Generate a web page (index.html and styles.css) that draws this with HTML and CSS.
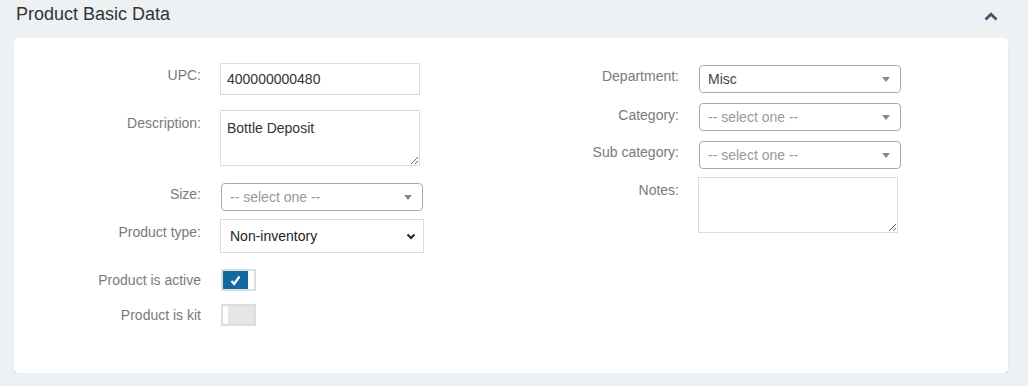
FILE: index.html
```html
<!DOCTYPE html>
<html>
<head>
  <title>Product Basic Data</title>
  <link rel="stylesheet" href="styles.css">
</head>
<body>
  <div class="panel-header">
    <h2>Product Basic Data</h2>
    <svg class="collapse-icon" width="14" height="9" viewBox="0 0 14 9">
      <polyline points="1.5,7.5 7,2.2 12.5,7.5" fill="none" stroke="#3b5676" stroke-width="2.8"/>
    </svg>
  </div>

  <div class="card">
    <div class="col col-left">
      <div class="row row-upc">
        <label>UPC:</label>
        <input type="text" class="text-input" value="400000000480">
      </div>
      <div class="row row-desc">
        <label>Description:</label>
        <textarea class="text-area">Bottle Deposit</textarea>
      </div>
      <div class="row row-size">
        <label>Size:</label>
        <div class="select2 select2-shift">
          <span class="placeholder">-- select one --</span>
          <span class="arrow"></span>
        </div>
      </div>
      <div class="row row-type">
        <label>Product type:</label>
        <div class="native-select">
          <select>
            <option>Non-inventory</option>
          </select>
          <svg class="native-chevron" width="10" height="7" viewBox="0 0 10 7">
            <polyline points="1.5,1.5 5,5 8.5,1.5" fill="none" stroke="#222" stroke-width="2"/>
          </svg>
        </div>
      </div>
      <div class="row row-toggle row-active">
        <label>Product is active</label>
        <div class="toggle toggle-on">
          <span class="toggle-fill">
            <svg width="11" height="11" viewBox="0 0 11 11">
              <polyline points="1.5,6 4.2,9 9.5,1.5" fill="none" stroke="#fff" stroke-width="2.2"/>
            </svg>
          </span>
          <span class="toggle-knob"></span>
        </div>
      </div>
      <div class="row row-toggle">
        <label>Product is kit</label>
        <div class="toggle toggle-off">
          <span class="toggle-knob"></span>
          <span class="toggle-fill"></span>
        </div>
      </div>
    </div>

    <div class="col col-right">
      <div class="row row-select">
        <label>Department:</label>
        <div class="select2">
          <span class="value">Misc</span>
          <span class="arrow"></span>
        </div>
      </div>
      <div class="row row-select">
        <label class="pad2">Category:</label>
        <div class="select2">
          <span class="placeholder">-- select one --</span>
          <span class="arrow"></span>
        </div>
      </div>
      <div class="row row-select row-sub">
        <label>Sub category:</label>
        <div class="select2">
          <span class="placeholder">-- select one --</span>
          <span class="arrow"></span>
        </div>
      </div>
      <div class="row row-notes">
        <label>Notes:</label>
        <textarea class="text-area notes-area"></textarea>
      </div>
    </div>
  </div>
</body>
</html>
```

FILE: styles.css
```css
/* Page */
body {
  font-family: "Liberation Sans", Arial, sans-serif;
  background-color: #eef1f4;
  margin: 0;
  padding: 0;
  color: #333;
}

/* Panel header */
.panel-header {
  display: flex;
  justify-content: space-between;
  align-items: flex-start;
  height: 38px;
  box-sizing: border-box;
  padding: 3px 30px 0 16px;
}
.panel-header h2 {
  margin: 0;
  font-size: 18px;
  line-height: 22px;
  font-weight: normal;
  color: #333;
}
.collapse-icon {
  margin-top: 9px;
}

/* Card */
.card {
  display: flex;
  margin: 0 20px 0 14px;
  height: 335px;
  box-sizing: border-box;
  background-color: #fff;
  border-radius: 4px;
  box-shadow: 0 1px 1px rgba(0, 0, 0, 0.22);
  padding: 25px 16px 0;
}
.col-left {
  width: 470px;
}
.col-right {
  padding-top: 2px;
}

/* Form rows */
.row {
  display: grid;
  grid-template-columns: 171px auto;
  column-gap: 19px;
  align-items: start;
}
.col-right .row {
  grid-template-columns: 179px auto;
  column-gap: 20px;
  margin-bottom: 10px;
}
.row label {
  font-size: 14px;
  line-height: 20px;
  color: #7a7a7a;
  text-align: right;
}
.row-upc {
  margin-bottom: 15px;
}
.row-upc label {
  padding-top: 2px;
}
.row-desc {
  margin-bottom: 17px;
}
.row-desc label {
  padding-top: 3px;
}
.row-size {
  margin-bottom: 8px;
}
.row-size label {
  padding-top: 1px;
}
.row-type {
  margin-bottom: 16px;
}
.row-type label {
  padding-top: 3px;
}
.row-toggle {
  align-items: center;
}
.row-active {
  margin-bottom: 13px;
}
.col-right .row-sub {
  margin-bottom: 8px;
}
.row-select label {
  padding-top: 1px;
}
.row-select label.pad2 {
  padding-top: 2px;
}
.row-notes label {
  padding-top: 3px;
}

/* Inputs */
.text-input {
  width: 200px;
  height: 32px;
  box-sizing: border-box;
  border: 1px solid #dcdcdc;
  padding: 0 6px;
  font-family: inherit;
  font-size: 14px;
  color: #333;
  outline: none;
}
.text-area {
  width: 200px;
  height: 56px;
  box-sizing: border-box;
  border: 1px solid #dcdcdc;
  padding: 7px 6px;
  font-family: inherit;
  font-size: 14px;
  line-height: 20px;
  color: #333;
  margin: 0;
  display: block;
  outline: none;
}
.notes-area {
  margin-left: -1px;
}

/* Select2 style dropdown */
.select2 {
  position: relative;
  width: 202px;
  height: 28px;
  box-sizing: border-box;
  border: 1px solid #aaa;
  border-radius: 4px;
  padding: 0 8px;
  font-size: 14px;
  line-height: 26px;
}
.select2-shift {
  margin-left: 1px;
}
.select2 .value {
  color: #444;
}
.select2 .placeholder {
  color: #999;
}
.select2 .arrow {
  position: absolute;
  right: 10px;
  top: 11px;
  border-top: 5px solid #888;
  border-left: 4px solid transparent;
  border-right: 4px solid transparent;
}

/* Native select */
.native-select {
  position: relative;
  width: 204px;
  height: 34px;
}
.native-select select {
  width: 204px;
  height: 34px;
  box-sizing: border-box;
  border: 1px solid #dcdcdc;
  background-color: #fff;
  padding: 0 9px;
  font-family: inherit;
  font-size: 14px;
  color: #222;
  appearance: none;
  -webkit-appearance: none;
  border-radius: 0;
  outline: none;
}
.native-chevron {
  position: absolute;
  right: 8px;
  top: 14px;
  pointer-events: none;
}

/* Toggle switches */
.toggle {
  display: flex;
  width: 35px;
  height: 22px;
  box-sizing: border-box;
  border: 2px solid #dddddd;
  margin-left: 1px;
}
.toggle-knob {
  background-color: #fff;
}
.toggle-on .toggle-fill {
  display: flex;
  align-items: center;
  justify-content: center;
  width: 25px;
  background-color: #136aa0;
}
.toggle-on .toggle-knob {
  width: 6px;
}
.toggle-off .toggle-knob {
  width: 5px;
}
.toggle-off .toggle-fill {
  flex-grow: 1;
  background-color: #e6e6e6;
}
```
